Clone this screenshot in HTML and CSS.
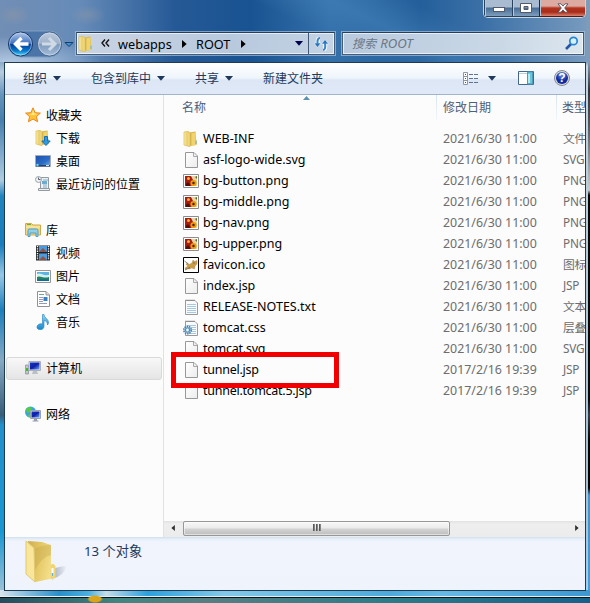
FILE: index.html
```html
<!DOCTYPE html>
<html lang="zh-CN">
<head>
<meta charset="utf-8">
<title>ROOT</title>
<link rel="stylesheet" href="styles.css">
</head>
<body>
<svg class="defs" aria-hidden="true">
  <defs>
    <linearGradient id="gold" x1="0" x2="1"><stop offset="0" stop-color="#fff0ac"/><stop offset=".5" stop-color="#e8cd70"/><stop offset="1" stop-color="#f5df8c"/></linearGradient>
    <linearGradient id="sheet" x1="0" y1="0" x2="1" y2="1"><stop offset="0" stop-color="#fff"/><stop offset="1" stop-color="#ececec"/></linearGradient>
    <linearGradient id="screen" x1="0" y1="0" x2="1" y2="1"><stop offset="0" stop-color="#1238c8"/><stop offset=".5" stop-color="#1020a8"/><stop offset="1" stop-color="#68a8ff"/></linearGradient>
    <linearGradient id="desk" x1="0" y1="0" x2="1" y2="1"><stop offset="0" stop-color="#1e50a8"/><stop offset=".6" stop-color="#2c6cc8"/><stop offset="1" stop-color="#78b8f0"/></linearGradient>
    <linearGradient id="water" x1="0" y1="0" x2="0" y2="1"><stop offset="0" stop-color="#8fd6f5"/><stop offset="1" stop-color="#1687ce"/></linearGradient>
    <symbol id="folder" viewBox="0 0 16 16">
      <path d="M5.500 1.500 12.500.5 13.500 14 6 15z" fill="#dcb94e"/>
      <path d="M1 1 5.500.3 7 2.500V15.700L1 14z" fill="url(#gold)" stroke="#d8bb55" stroke-width=".7"/>
      <path d="M8 2.500 12.500 1.500V9l1.500.5V13.500l-6 1.500z" fill="#f0d36c"/>
      <path d="M8 2.500v12" stroke="#d0aa43" stroke-width=".6"/>
      <path d="M13 9.500v3.500" stroke="#58aee0"/>
    </symbol>
    <symbol id="page" viewBox="0 0 16 16">
      <path d="M2.500.5H11L14.500 4V15.500H2.500z" fill="url(#sheet)" stroke="#989898"/>
      <path d="M10.500 1v3.500H14" fill="#eee" stroke="#aaa"/>
    </symbol>
    <symbol id="image" viewBox="0 0 16 16">
      <path d="M.5 1.500h15v13H.5z" fill="#fff" stroke="#8c8c8c"/>
      <path d="M2 3h12v10H2z" fill="#e9d3a0"/>
      <path d="M2 3h6l2 4 1 4-3 2H2z" fill="#a61d12"/>
      <circle cx="5.500" cy="5.500" r="1.500" fill="#f4af35"/>
      <path d="M3 11c2-3 4-1 4 2H3z" fill="#501009"/>
      <circle cx="10.500" cy="10" r="3.100" fill="#ef990a"/><circle cx="10.500" cy="10" r="1.200" fill="#432109"/>
      <path d="m12 4 2-1v3" fill="#506c2c"/>
    </symbol>
    <symbol id="text" viewBox="0 0 16 16">
      <path d="M2.500 1.500H12L14.500 4V15.500H2.500z" fill="#f8fafc" stroke="#999"/>
      <path d="M3 2V.5M5 2V.5M7 2V.5M9 2V.5M11 2V.5" stroke="#808080" stroke-width=".8"/>
      <path d="M4 5.500h9M4 7.500h9M4 9.500h9M4 11.500h9M4 13.500h9" stroke="#a7c8de"/>
    </symbol>
    <symbol id="css" viewBox="0 0 16 16">
      <use href="#text"/>
      <circle cx="4.500" cy="10" r="3.700" fill="#dcebf4" stroke="#4680ae" stroke-width="1.600" stroke-dasharray="1.500 .8"/>
      <circle cx="4.500" cy="10" r="2.300" fill="#b7d4e8" stroke="#4680ae"/><circle cx="4.500" cy="10" r=".9" fill="#fff"/>
    </symbol>
    <symbol id="cat" viewBox="0 0 16 16">
      <path d="M.5.5h15v15H.5z" fill="#fff" stroke="#000"/>
      <path d="M2 11 5 9 3 7.500 4 6l2 1.500 3-1.500 1-3 1.500 1.500L14 3.500V7l-2 2-.5 3-3-1-2 1-2-.5-2 1z" fill="#c99c48" stroke="#a38347" stroke-width=".4"/>
      <path d="m1.500 4 4 3m-3.500 6 5-2.500M10 6h2" stroke="#6c5d3c" stroke-width=".7"/>
    </symbol>
    <symbol id="star" viewBox="0 0 16 16"><path d="m8 .8 2.100 4.900 5.300.4-4 3.500 1.300 5.200L8 12l-4.600 2.800 1.200-5.200-4-3.500 5.300-.4z" fill="#ffc333" stroke="#e98723"/><path d="m8 3 1.400 3.600 3.400.4-5 1-3.800-.6 3-.6z" fill="#ffe994"/></symbol>
    <symbol id="download" viewBox="0 0 16 16"><use href="#folder"/><path d="M9.500 6.500h3V11h2.700L11 15.500 6.800 11h2.700z" fill="#2d9be3" stroke="#1471b5"/></symbol>
    <symbol id="desktop" viewBox="0 0 16 16"><path d="M.5 2.500h15v11H.5z" fill="url(#desk)" stroke="#a7adb5"/><path d="M1 12h14v1.500H1z" fill="#263f69"/><circle cx="2.500" cy="12" r="1.200" fill="#65d5ee"/><path d="M11 12.500h3" stroke="#d3e6f4"/></symbol>
    <symbol id="recent" viewBox="0 0 16 16"><path d="M5.500 1.500h8v11h-8zM3.500 12.500h11v2h-11z" fill="#edf0f2" stroke="#929ba1"/><path d="M8 4h5M8 9h4M8 11h4" stroke="#7eabc4"/><path d="M7 5h5v3H7z" fill="#6aadd1"/><circle cx="3.500" cy="3.500" r="3" fill="#eef1f4" stroke="#9aa3aa"/><path d="M3.500 1.500v2h2" fill="none" stroke="#59636a"/></symbol>
    <symbol id="library" viewBox="0 0 16 16"><path d="M.5 3V1.500h6L8 3h7.500v10H.5z" fill="#f2d57d" stroke="#d0aa48"/><path d="M1 5h14" stroke="#fff0b0"/><path d="M2 2.500h4" stroke="#5fb340"/><path d="M3 14.500V8.500q0-1.500 1.500-1.500h7Q13 7 13 8.500v6h-2V11H5v3.500z" fill="#8fd0ed" stroke="#509fc8"/></symbol>
    <symbol id="video" viewBox="0 0 16 16"><path d="M1 .5h14v15H1z" fill="#202426"/><path d="M4 1h8v6H4zM4 8.500h8V15H4z" fill="#4a9be0"/><path d="m4 7 4-4 4 4zM4 15l4-4 4 4z" fill="#8c5549"/><path d="M2.500 1v14M13.500 1v14" stroke="#fff" stroke-width="1.400" stroke-dasharray="1.300 1"/></symbol>
    <symbol id="picture" viewBox="0 0 16 16"><path d="M.5 2.500h15v12H.5z" fill="#fff" stroke="#979797"/><path d="M2 4h12v9H2z" fill="#5cb4e0"/><path d="M2 6c4-2 5 2 12 1v3H2z" fill="#d6f0ef"/><path d="M2 9c3-2 6 2 12 0v4H2z" fill="#21845b"/><path d="M2 11.500h12V13H2z" fill="#1368a5"/></symbol>
    <symbol id="document" viewBox="0 0 16 16"><path d="M2.500.5H11L14.500 4V15.500H2.500z" fill="#fff" stroke="#929292"/><path d="M11 .5V4h3.500" fill="#ddd" stroke="#969696"/><path d="M4 3.500h5" stroke="#65a995"/><path d="M4 6.500h4M4 8.500h4M4 10.500h4M4 12.500h8" stroke="#9299bd"/><path d="M8.500 6h4v4h-4z" fill="#3182c9"/></symbol>
    <symbol id="music" viewBox="0 0 16 16"><path d="M7.500.5H9c0 3.500 5 4.500 4.500 8.500l-1 2c0-3-1.500-4-3.500-4.500V12c0 3.500-3 4-5 3.500-3-.8-2.500-4.500.5-5.500 1-.4 2-.3 3 0z" fill="url(#water)" stroke="#1d82c0" stroke-width=".6"/></symbol>
    <symbol id="computer" viewBox="0 0 16 16"><path d="M.5 5h3v9h-3z" fill="#bfc6ca" stroke="#858c91" stroke-width=".7"/><path d="M1 8h2v3H1z" fill="#42b72f"/><path d="M4 1.500h11.500v9H4z" fill="#dfe2e5" stroke="#aab0b5"/><path d="M5 2.500h9.500v7H5z" fill="url(#screen)"/><path d="M8 11h4l1 3H7z" fill="#bbc0c4"/></symbol>
    <symbol id="network" viewBox="0 0 16 16"><circle cx="5.500" cy="6" r="5.500" fill="#37a6dd"/><path d="m1 3 3-2 3 1-2 4-3 1zm1 7 3-2 3 2-2 2z" fill="#55cc3b"/><path d="M5.500 4.500h10v8h-10z" fill="#e3e7eb" stroke="#9aa4ac"/><path d="M6.500 5.500h8v6h-8z" fill="url(#screen)"/><path d="M9 13h3v1.500h1.500v1h-6v-1H9z" fill="#969fa8"/></symbol>
    <symbol id="down" viewBox="0 0 8 5"><path d="M0 0h8L4 4.700z" fill="currentColor"/></symbol>
    <symbol id="right" viewBox="0 0 5 8"><path d="m0 0 4.700 4L0 8z" fill="currentColor"/></symbol>
  </defs>
</svg>
<div class="window">
  <div class="caption">
    <div class="caption-buttons">
      <span class="cap min"><svg width="12" height="6"><rect x=".5" y=".5" width="11" height="4" fill="#fff" stroke="#53586a"/></svg></span>
      <span class="cap max"><svg width="12" height="10"><path d="M.5.5h11v9H.5zM4 3.500v3h4v-3z" fill="#fff" fill-rule="evenodd" stroke="#53586a"/></svg></span>
      <span class="cap close"><svg width="12" height="10"><path d="m1 .8h3l2 2.300L8 .8h3L7.700 5 11 9.200H8L6 6.900 4 9.200H1L4.300 5z" fill="#fff" stroke="#54505c" stroke-width=".9"/></svg></span>
    </div>
  </div>
  <div class="address-row">
    <svg class="nav-buttons" width="68" height="28" viewBox="0 0 68 28">
      <defs>
        <linearGradient id="back" x2="0" y2="1"><stop stop-color="#b6ccec"/><stop offset=".48" stop-color="#3f70bf"/><stop offset=".5" stop-color="#063a94"/><stop offset=".78" stop-color="#0878cd"/><stop offset="1" stop-color="#50e0ff"/></linearGradient>
        <linearGradient id="forward" x2="0" y2="1"><stop stop-color="#bdcbdd"/><stop offset=".5" stop-color="#9bb0ca"/><stop offset=".52" stop-color="#7d9abd"/><stop offset="1" stop-color="#a5bfda"/></linearGradient>
      </defs>
      <path d="M13.500 1h28a13 13 0 0 1 0 26h-28a13 13 0 0 1 0-26z" fill="#4b75a8" stroke="#80a0c4"/>
      <circle cx="12.500" cy="14" r="12" fill="url(#back)" stroke="#193761"/><circle cx="12.500" cy="14" r="11" fill="none" stroke="#bdd3f0" stroke-opacity=".65"/>
      <circle cx="41.500" cy="14" r="12" fill="url(#forward)" stroke="#4a678c"/><circle cx="41.500" cy="14" r="11" fill="none" stroke="#d4dfec" stroke-opacity=".65"/>
      <path d="M20.500 14h-13m6-6-6 6 6 6" fill="none" stroke="#fff" stroke-width="3.400"/>
      <path d="M34 14h13m-6-6 6 6-6 6" fill="none" stroke="#d0dae6" stroke-width="3"/>
      <path d="M57 12.500h8l-4 4z" fill="#3c93d0" stroke="#163d6e"/>
    </svg>
    <div class="address">
      <svg class="i16"><use href="#folder"/></svg>
      <svg class="chevrons" width="9" height="8"><path d="M4 .5 1 4l3 3.500M8 .5 5 4l3 3.500" fill="none" stroke="#111" stroke-width="1.400"/></svg>
      <span class="crumb first">webapps</span><svg class="tri"><use href="#right"/></svg>
      <span class="crumb second">ROOT</span><svg class="tri"><use href="#right"/></svg>
      <svg class="drop"><use href="#down"/></svg>
      <span class="refresh"><svg width="15" height="14"><path d="M6 1Q3 1 4 7M9 13q3 0 2-7" fill="none" stroke="#f4faff" stroke-width="4"/><path d="M0 6h7l-3.500 4.500zM7.500 7h7L11 2.500z" fill="#2872bd" stroke="#eef7ff" stroke-width=".6"/><path d="M6 1Q3 1 3.500 7M9 13q3 0 2-7" fill="none" stroke="#3886ca" stroke-width="2"/></svg></span>
    </div>
    <div class="search"><span>搜索 <span class="query">ROOT</span></span><svg width="14" height="14"><path d="m1 13 5-5" stroke="#2456a3" stroke-width="2.600"/><circle cx="8.500" cy="5" r="3.700" fill="#d8effc" stroke="#2685d2" stroke-width="1.700"/></svg></div>
  </div>
  <main class="panel">
    <div class="toolbar">
      <span class="tool organize">组织<svg class="arrow"><use href="#down"/></svg></span>
      <span class="tool include">包含到库中<svg class="arrow"><use href="#down"/></svg></span>
      <span class="tool share">共享<svg class="arrow"><use href="#down"/></svg></span>
      <span class="tool">新建文件夹</span>
      <span class="view-tools">
        <svg width="15" height="13"><path d="M.5.5h4v12h-4zM.5 4.500h4M.5 8.500h4" fill="#fff" stroke="#8d98a7"/><path d="M2 2.500h1M2 10.500h1" stroke="#456"/><path d="M2 6.500h1" stroke="#c03030"/><path d="M6 2.500h4m1 0h4M6 6.500h4m1 0h4M6 10.500h4m1 0h4" stroke="#61738a"/></svg>
        <svg class="arrow"><use href="#down"/></svg>
        <svg class="preview" width="16" height="14"><path d="M.5.5h15v13H.5z" fill="#fff" stroke="#47668c"/><path d="M1 2.500h14" stroke="#b8cfe2"/><path d="M9.500 1h5v12h-5z" fill="#69c6dc" stroke="#4c9bb7"/><path d="M11 3v9" stroke="#b2eaf0" stroke-width="2"/></svg>
        <svg class="help" width="16" height="16"><defs><radialGradient id="helpfill" cy=".25"><stop stop-color="#7192ec"/><stop offset="1" stop-color="#102b9f"/></radialGradient></defs><circle cx="8" cy="8" r="7.500" fill="#d8d9dc" stroke="#85888e"/><circle cx="8" cy="8" r="6" fill="url(#helpfill)"/><text x="8" y="12.300" text-anchor="middle">?</text></svg>
      </span>
    </div>
    <div class="content">
      <nav class="sidebar">
        <div class="nav-item"><svg class="i16"><use href="#star"/></svg>收藏夹</div>
        <div class="nav-item child"><svg class="i16"><use href="#download"/></svg>下载</div>
        <div class="nav-item child"><svg class="i16"><use href="#desktop"/></svg>桌面</div>
        <div class="nav-item child"><svg class="i16"><use href="#recent"/></svg>最近访问的位置</div>
        <div class="nav-item group"><svg class="i16"><use href="#library"/></svg>库</div>
        <div class="nav-item child"><svg class="i16"><use href="#video"/></svg>视频</div>
        <div class="nav-item child"><svg class="i16"><use href="#picture"/></svg>图片</div>
        <div class="nav-item child"><svg class="i16"><use href="#document"/></svg>文档</div>
        <div class="nav-item child"><svg class="i16"><use href="#music"/></svg>音乐</div>
        <div class="nav-item group selected"><svg class="i16"><use href="#computer"/></svg>计算机</div>
        <div class="nav-item group"><svg class="i16"><use href="#network"/></svg>网络</div>
      </nav>
      <section class="files">
        <div class="columns"><span>名称<svg class="sort" width="7" height="4"><path d="M0 4 3.500 0 7 4z" fill="#5d91ae"/></svg></span><span>修改日期</span><span>类型</span></div>
        <div class="rows">
          <div class="file"><svg class="i16"><use href="#folder"/></svg><b>WEB-INF</b><time>2021/6/30 11:00</time><i>文件</i></div>
          <div class="file"><svg class="i16"><use href="#page"/></svg><b>asf-logo-wide.svg</b><time>2021/6/30 11:00</time><i>SVG</i></div>
          <div class="file"><svg class="i16"><use href="#image"/></svg><b>bg-button.png</b><time>2021/6/30 11:00</time><i>PNG</i></div>
          <div class="file"><svg class="i16"><use href="#image"/></svg><b>bg-middle.png</b><time>2021/6/30 11:00</time><i>PNG</i></div>
          <div class="file"><svg class="i16"><use href="#image"/></svg><b>bg-nav.png</b><time>2021/6/30 11:00</time><i>PNG</i></div>
          <div class="file"><svg class="i16"><use href="#image"/></svg><b>bg-upper.png</b><time>2021/6/30 11:00</time><i>PNG</i></div>
          <div class="file"><svg class="i16"><use href="#cat"/></svg><b>favicon.ico</b><time>2021/6/30 11:00</time><i>图标</i></div>
          <div class="file"><svg class="i16"><use href="#page"/></svg><b>index.jsp</b><time>2021/6/30 11:00</time><i>JSP</i></div>
          <div class="file"><svg class="i16"><use href="#text"/></svg><b>RELEASE-NOTES.txt</b><time>2021/6/30 11:00</time><i>文本</i></div>
          <div class="file"><svg class="i16"><use href="#css"/></svg><b>tomcat.css</b><time>2021/6/30 11:00</time><i>层叠</i></div>
          <div class="file narrow"><svg class="i16"><use href="#page"/></svg><b>tomcat.svg</b><time>2021/6/30 11:00</time><i>SVG</i></div>
          <div class="file narrow"><svg class="i16"><use href="#page"/></svg><b>tunnel.jsp</b><time>2017/2/16 19:39</time><i>JSP</i></div>
          <div class="file narrow"><svg class="i16"><use href="#page"/></svg><b>tunnel.tomcat.5.jsp</b><time>2017/2/16 19:39</time><i>JSP</i></div>
          <div class="marker"></div>
        </div>
        <div class="scrollbar"><svg class="tri left"><use href="#right"/></svg><span class="thumb"><em></em><em></em><em></em></span><svg class="tri"><use href="#right"/></svg></div>
      </section>
    </div>
    <footer class="details">
      <svg width="44" height="46" viewBox="0 0 44 46"><defs><linearGradient id="shade"><stop stop-color="#8b95a5" stop-opacity=".75"/><stop offset="1" stop-color="#8b95a5" stop-opacity="0"/></linearGradient><linearGradient id="leaf" x2="1" y2=".3"><stop stop-color="#cfae4c"/><stop offset=".5" stop-color="#e5c967"/><stop offset="1" stop-color="#f5e08d"/></linearGradient></defs><path d="m28 41 3-13q7-2 12-2-3 10-15 13z" fill="url(#shade)"/><path d="m4 1 14 1 9 3v23l3-3 1 2v11l-20 4z" fill="url(#leaf)"/><path d="M10 9q7-4 17-4v10q-9 1-17 17z" fill="#b99a41" fill-opacity=".3"/><path d="m2 1 8 7 1 34-9-8z" fill="#f9e69a" stroke="#e2c971"/><path d="M26.500 27q0-3 2.300-3t2.700 3v11l-5 1z" fill="#f0d572"/><path d="M28.500 28v8" stroke="#fff" stroke-width="2"/><path d="M28.500 33v3" stroke="#5eb2db" stroke-width="1.500"/></svg>
      <span>13 个对象</span>
    </footer>
  </main>
</div>
</body>
</html>
```
FILE: styles.css
```css
* { box-sizing: border-box; }
body { margin: 0; width: 590px; height: 603px; overflow: hidden; font: 12px "Noto Sans", "Noto Sans CJK SC", sans-serif; color: #000; background: #17687c; }
svg { display: block; flex-shrink: 0; }
.defs { position: absolute; width: 0; height: 0; }
.window {
  display: flex; flex-direction: column; height: 603px; padding: 0 4px 12px;
  background:
    radial-gradient(ellipse 8px 4px at 95px 599px, #d8a51c 70%, transparent),
    linear-gradient(90deg, #234d5d, #418580 20%, #557e82 35%, #2c7c88 65%, #16618a) 0 598px / 590px 5px no-repeat,
    linear-gradient(#111, #111) 0 597px / 590px 1px no-repeat,
    linear-gradient(#d9f1fb, #d9f1fb) 0 596px / 590px 1px no-repeat,
    linear-gradient(90deg, #d7e5ed, #288fca 10%, #4bb0df 15%, #c5dde7 18%, #2ca0dc 25%, #83c8e8 38%, #4eaada 66%, #67b8e4 75%, #3d98d2) 0 590px / 590px 6px no-repeat,
    linear-gradient(#809bb8 62px, #30363b 90px, #53585c 125px, #c7ccd0 190px, #080808 195px, #090c0e 400px, #30414c 415px, #050607 440px, #050607 488px, #4793c9 495px, #439fdb) 588px 0 / 2px 597px no-repeat,
    linear-gradient(#809bb8 62px, #c3d3df 66px, #a8c0d2 480px, #a2d0ec) 586px 0 / 2px 597px no-repeat,
    linear-gradient(#8ba9c6, #b7cce0 10px, #6594bb 33px, #477eae 58px, #b0cce0 118px, #2184be 134px, #197dbc 183px, #98c7e5 213px, #1c7ebc 248px, #85aac4 298px, #385d79 353px, #2290cb 363px, #1997d2 470px, #a9c6d8) 0 62px / 4px 535px no-repeat,
    radial-gradient(ellipse 90px 30px at 12px 66px, rgba(205,224,244,.8), transparent),
    radial-gradient(ellipse 16px 10px at 14px 15px, rgba(140,150,165,.6), transparent),
    radial-gradient(ellipse 18px 10px at 88px 15px, rgba(140,150,165,.5), transparent),
    linear-gradient(25deg, transparent 35%, rgba(69,130,185,.5) 50%, transparent 65%) 200px 0 / 390px 62px no-repeat,
    linear-gradient(90deg, #718eb5, #668bb8 80px, #255996 175px, #195391 250px, #3470aa 330px, #245f9b 420px, #3c71a7 485px, #7a9cbf 590px);
}
.caption { display: flex; justify-content: flex-end; height: 30px; }
.caption-buttons { display: flex; width: 103px; height: 18px; overflow: hidden; border: 1px solid #c5d5e5; border-top: 0; border-radius: 0 0 5px 5px; box-shadow: inset 0 0 0 1px #263e59; }
.cap { display: flex; align-items: center; justify-content: center; height: 17px; border: solid #2a425e; border-width: 0 0 1px 1px; background: linear-gradient(#a9bbd0 0 7px, #486d96 8px, #7d9dbd); box-shadow: inset 1px 0 #b9c8d9; }
.min { width: 28px; padding-top: 4px; }
.max { width: 27px; padding-bottom: 1px; }
.close { flex: 1; padding-bottom: 1px; border-color: #501a19; background: linear-gradient(#ddaaa2 0 6px, #b4351e 8px, #a52b18 12px, #dd806c); }
.address-row { display: flex; height: 32px; padding-left: 4px; }
.address, .search { display: flex; align-items: center; height: 23px; margin-top: 2px; border: 1px solid #435d7b; border-top-color: #273e5a; box-shadow: 0 0 0 1px rgba(174,199,225,.65), inset 0 0 0 1px rgba(255,255,255,.65); background: linear-gradient(90deg, #c9d4e3, #b8c9de 60%, #c3d3e4); }
.address { width: 259px; padding-left: 1px; }
.i16 { width: 16px; height: 16px; }
.chevrons { margin: 0 8px 2px 7px; }
.crumb { font-size: 12.700px; line-height: 20px; }
.first { width: 64px; }
.second { width: 45px; }
.tri { width: 5px; height: 8px; }
.first + .tri { margin-right: 9px; }
.drop { width: 8px; height: 5px; margin-left: auto; margin-right: 5px; color: #000050; }
.refresh { display: flex; align-items: center; justify-content: center; width: 26px; height: 21px; border-left: 1px solid #425a75; }
.search { width: 242px; margin-left: 7px; padding: 0 4px 2px 9px; justify-content: space-between; color: #6c7885; font-style: italic; background: linear-gradient(90deg, #b8c9de, #cad8e6 65%, #dce6ee); }
.query { margin-left: 1px; font-size: 13.200px; }
.panel { display: flex; flex-direction: column; width: 582px; height: 529px; border: 1px solid #1e3b55; background: #fcfcfc; overflow: hidden; }
.toolbar { display: flex; align-items: center; height: 32px; padding: 0 15px 1px 18px; flex-shrink: 0; color: #1e395b; background: linear-gradient(#fff, #eef5fc 15px, #dce6f4 17px, #dfe9f7); border-bottom: 1px solid #9fb3cd; }
.tool { display: flex; align-items: center; }
.arrow { width: 8px; height: 5px; margin-left: 6px; }
.organize, .include, .share { margin-right: 30px; }
.view-tools { display: flex; align-items: center; margin-left: auto; }
.view-tools .arrow { margin-left: 10px; }
.preview { margin-left: 22px; }
.help { margin-left: 20px; }
.help text { font: bold 12px "Liberation Sans", sans-serif; fill: #fff; }
.content { display: flex; height: 442px; flex-shrink: 0; }
.sidebar { width: 159px; padding: 9px 1px 0; border-right: 1px solid #d6e5f5; flex-shrink: 0; }
.nav-item { display: flex; align-items: center; height: 23px; padding: 0 0 2px 18px; gap: 5px; border: 1px solid transparent; border-radius: 3px; white-space: nowrap; }
.nav-item.child { padding-left: 28px; }
.group { margin-top: 23px; }
.selected { border-color: #d9d9d9; background: linear-gradient(#f8f8f8, #e5e5e5); }
.files { display: flex; flex-direction: column; width: 421px; }
.columns { display: grid; grid-template-columns: 273px 120px 1fr; height: 25px; line-height: 26px; color: #4c607a; overflow: hidden; flex-shrink: 0; }
.columns span { position: relative; padding-left: 6px; white-space: nowrap; border-right: 1px solid; border-image: linear-gradient(#d5e4f2, #f4f8fc) 1; }
.columns span:first-child { padding-left: 18px; }
.columns span:last-child { padding-left: 5px; border-right: 0; }
.sort { position: absolute; left: 139px; top: 1px; }
.rows { position: relative; padding: 8px 0 0 19px; height: 401px; overflow: hidden; }
.file { display: grid; grid-template-columns: 20px 240px 120px 24px; align-items: center; height: 21px; white-space: nowrap; line-height: 21px; }
.file b { font-weight: 400; font-size: 12.500px; }
.narrow b { letter-spacing: -.25px; }
.file time, .file i { font-style: normal; color: #6d6d6d; font-size: 12.400px; }
.file i { font-size: 11.800px; letter-spacing: -.2px; }
.marker { position: absolute; left: 7px; top: 232px; width: 168px; height: 36px; border: 5px solid #f00000; }
.scrollbar { display: flex; align-items: center; height: 16px; padding: 0 6px 2px 7px; background: linear-gradient(#e2e2e2, #eee 3px, #ececec); color: #303030; }
.scrollbar .tri { width: 4px; height: 6px; margin-left: auto; }
.scrollbar .left { margin: 0 8px 0 0; transform: scaleX(-1); }
.thumb { display: flex; align-items: center; justify-content: center; gap: 1px; width: 267px; height: 15px; border: 1px solid #979797; border-radius: 2px; background: linear-gradient(#f8f8f8, #ebebeb 6px, #d3d3d3 7px, #bebebe); box-shadow: inset 0 0 0 1px rgba(255,255,255,.5); }
.thumb em { width: 2px; height: 7px; margin-bottom: 1px; background: linear-gradient(90deg, #444, #999); }
.details { display: flex; height: 53px; padding: 3px 0 0 19px; color: #1e395b; background: linear-gradient(#cfdeee, #e6eef8 2px, #f1f4fc 5px, #eff3fb); }
.details span { margin: 1px 0 0 16px; line-height: 20px; font-size: 13.200px; }
```
